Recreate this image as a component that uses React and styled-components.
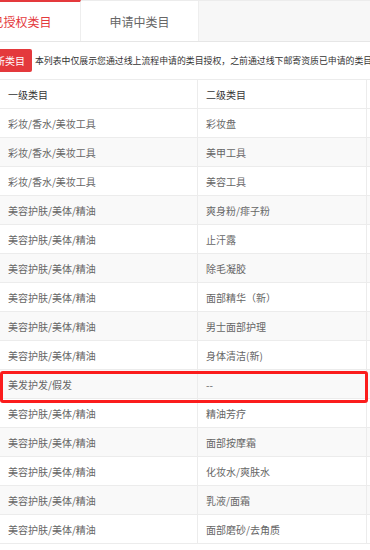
import React from "react";
import styled, { createGlobalStyle } from "styled-components";

const GlobalStyle = createGlobalStyle`
  html, body { margin: 0; padding: 0; background: #fff; overflow: hidden; }
  body {
    font-family: "Noto Sans CJK SC", "Noto Sans", "Liberation Sans", sans-serif;
    width: 370px;
  }
`;

const Page = styled.div`
  width: 370px;
  overflow: hidden;
`;

const TabBar = styled.div`
  display: flex;
  height: 40px;
  margin-left: -37px;
  background: #f7f7f7;
  border-top: 1px solid #ececec;
  border-bottom: 1px solid #e6e6e6;
`;

const Tab = styled.div`
  box-sizing: border-box;
  width: 118px;
  display: flex;
  align-items: center;
  justify-content: center;
  font-size: 12px;
  color: ${(p) => (p.$active ? "#e4393c" : "#666")};
  background: #fff;
  border-top: ${(p) => (p.$active ? "2px solid #e4393c" : "none")};
  margin-top: ${(p) => (p.$active ? "-1px" : "0")};
  border-right: 1px solid #eeeeee;
`;

const Toolbar = styled.div`
  display: flex;
  align-items: center;
  gap: 3px;
  margin-top: 7px;
  margin-left: -32px;
  height: 23px;
  white-space: nowrap;
`;

const AddButton = styled.div`
  flex: none;
  height: 23px;
  padding: 0 7px;
  display: flex;
  align-items: center;
  background: #e4393c;
  color: #fff;
  font-size: 10px;
  border-radius: 2px;
`;

const Notice = styled.div`
  font-size: 8.9px;
  color: #333;
`;

const TableWrap = styled.div`
  position: relative;
  margin-top: 7px;
  width: 420px;
`;

const Table = styled.div`
  border-top: 1px solid #ececec;
`;

const Row = styled.div`
  display: grid;
  grid-template-columns: 198px 169px 1fr;
  height: 29px;
  box-sizing: border-box;
  border-bottom: 1px solid #ececec;
  background: ${(p) => (p.$striped ? "#f9f9f9" : "#fff")};
`;

const Cell = styled.div`
  display: flex;
  align-items: center;
  padding-left: 8px;
  font-size: 10px;
  color: ${(p) => (p.$head ? "#333" : "#666")};
  border-right: 1px solid #ececec;
  white-space: nowrap;
  overflow: hidden;
`;

const Highlight = styled.div`
  position: absolute;
  left: 0;
  top: 292px;
  width: 368px;
  height: 32px;
  box-sizing: border-box;
  border: 3px solid #fb1c1c;
  border-radius: 3px;
  pointer-events: none;
`;

const rows = [
  ["彩妆/香水/美妆工具", "彩妆盘"],
  ["彩妆/香水/美妆工具", "美甲工具"],
  ["彩妆/香水/美妆工具", "美容工具"],
  ["美容护肤/美体/精油", "爽身粉/痱子粉"],
  ["美容护肤/美体/精油", "止汗露"],
  ["美容护肤/美体/精油", "除毛凝胶"],
  ["美容护肤/美体/精油", "面部精华（新）"],
  ["美容护肤/美体/精油", "男士面部护理"],
  ["美容护肤/美体/精油", "身体清洁(新)"],
  ["美发护发/假发", "--"],
  ["美容护肤/美体/精油", "精油芳疗"],
  ["美容护肤/美体/精油", "面部按摩霜"],
  ["美容护肤/美体/精油", "化妆水/爽肤水"],
  ["美容护肤/美体/精油", "乳液/面霜"],
  ["美容护肤/美体/精油", "面部磨砂/去角质"],
];

export default function App() {
  return (
    <Page>
      <GlobalStyle />
      <TabBar>
        <Tab $active>已授权类目</Tab>
        <Tab>申请中类目</Tab>
      </TabBar>
      <Toolbar>
        <AddButton>申请新类目</AddButton>
        <Notice>
          本列表中仅展示您通过线上流程申请的类目授权，之前通过线下邮寄资质已申请的类目
        </Notice>
      </Toolbar>
      <TableWrap>
        <Table>
          <Row>
            <Cell $head>一级类目</Cell>
            <Cell $head>二级类目</Cell>
            <Cell $head></Cell>
          </Row>
          {rows.map(([a, b], i) => (
            <Row key={i} $striped={i % 2 === 1}>
              <Cell>{a}</Cell>
              <Cell>{b}</Cell>
              <Cell></Cell>
            </Row>
          ))}
        </Table>
        <Highlight />
      </TableWrap>
    </Page>
  );
}
